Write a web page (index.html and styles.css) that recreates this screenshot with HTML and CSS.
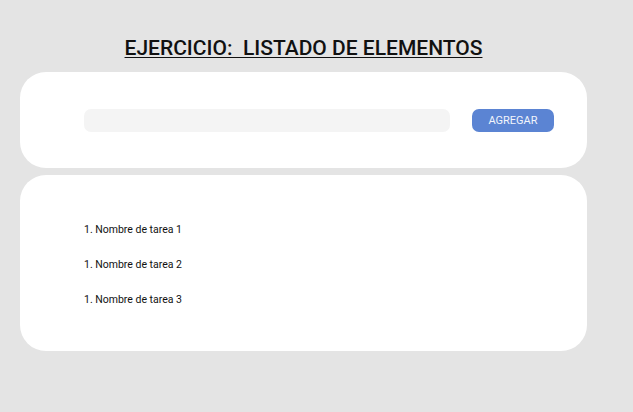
FILE: index.html
```html
<!DOCTYPE html>
<html lang="es">
<head>
<meta charset="utf-8">
<title>Listado de elementos</title>
<link rel="stylesheet" href="styles.css">
</head>
<body>
<main class="page">
  <h1 class="title">EJERCICIO:&nbsp; LISTADO DE ELEMENTOS</h1>
  <section class="card card-form">
    <div class="input"></div>
    <button class="btn">AGREGAR</button>
  </section>
  <section class="card card-list">
    <ul class="list">
      <li>1. Nombre de tarea 1</li>
      <li>1. Nombre de tarea 2</li>
      <li>1. Nombre de tarea 3</li>
    </ul>
  </section>
</main>
</body>
</html>
```
FILE: styles.css
```css
html, body {
  margin: 0;
  padding: 0;
  background: #e4e4e4;
  font-family: Roboto, "Liberation Sans", sans-serif;
  color: #111;
}
.page {
  width: 567px;
  margin-left: 20px;
  padding-top: 36px;
  display: flex;
  flex-direction: column;
}
.title {
  margin: 0 0 12px;
  font-size: 21px;
  font-weight: 500;
  line-height: 24px;
  text-align: center;
  text-decoration: underline;
  text-underline-offset: 2px;
  text-decoration-thickness: 1px;
  color: #111;
}
.card {
  background: #fff;
  border-radius: 26px;
}
.card-form {
  height: 96px;
  box-sizing: border-box;
  display: flex;
  align-items: center;
  padding: 0 33px 0 64px;
  gap: 22px;
}
.input {
  flex: 1;
  height: 23px;
  background: #f4f4f4;
  border-radius: 7px;
}
.btn {
  width: 82px;
  height: 23px;
  border: none;
  border-radius: 7px;
  background: #5b84d3;
  color: #f2f5fb;
  font-family: Roboto, "Liberation Sans", sans-serif;
  font-size: 11px;
  padding: 0;
}
.card-list {
  margin-top: 7px;
  height: 176px;
  box-sizing: border-box;
  padding: 48px 0 0 64px;
}
.list {
  list-style: none;
  margin: 0;
  padding: 0;
  display: flex;
  flex-direction: column;
  gap: 21px;
}
.list li {
  font-size: 10.5px;
  line-height: 14px;
  color: #111;
}
```
